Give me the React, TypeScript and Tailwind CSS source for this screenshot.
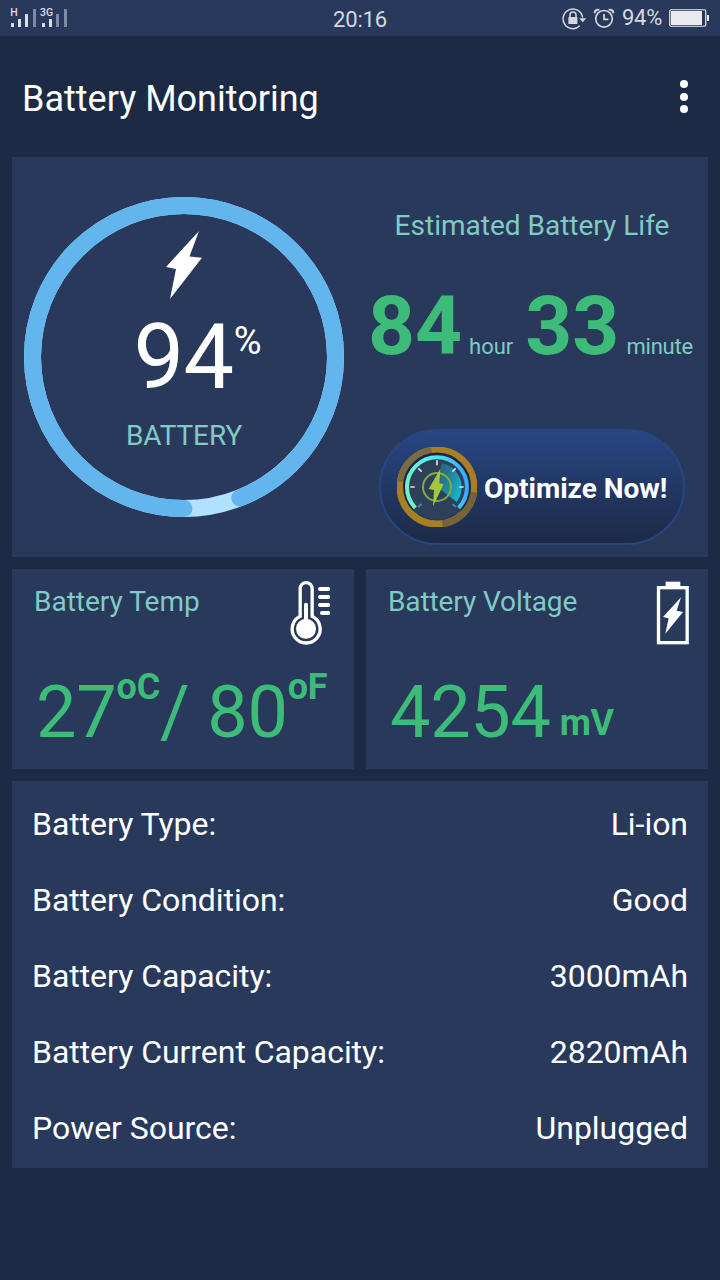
import React from "react";

const details = [
	{ label: "Battery Type:", value: "Li-ion" },
	{ label: "Battery Condition:", value: "Good" },
	{ label: "Battery Capacity:", value: "3000mAh" },
	{ label: "Battery Current Capacity:", value: "2820mAh" },
	{ label: "Power Source:", value: "Unplugged" },
];

const SignalIcons = () => (
	<svg width="70" height="36" viewBox="0 0 70 36" fill="#dcdfe6">
		<text x="10.3" y="15.8" fontSize="10.5" fontWeight="500">
			H
		</text>
		<text x="40" y="16.2" fontSize="10.5" fontWeight="500">
			3G
		</text>
		<rect x="11" y="23" width="3" height="4" rx="0.5" />
		<rect x="18" y="19" width="3" height="8" rx="0.5" />
		<rect x="25" y="14" width="3" height="13" rx="0.5" />
		<rect x="33" y="9" width="3" height="18" rx="0.5" fill="#7f8aa3" />
		<rect x="42" y="23" width="3" height="4" rx="0.5" />
		<rect x="49" y="19" width="3" height="8" rx="0.5" />
		<rect x="56" y="14" width="3" height="13" rx="0.5" fill="#7f8aa3" />
		<rect x="64" y="9" width="3" height="18" rx="0.5" fill="#7f8aa3" />
	</svg>
);

const RotationLockIcon = () => (
	<svg width="26" height="24" viewBox="0 0 26 24" fill="none" stroke="#d6d9e0">
		<path d="M17.8 19.8A9.8 9.8 0 1 1 20.6 11.5" strokeWidth="1.5" />
		<path d="M17.2 12.2h7l-3.5 4z" fill="#d6d9e0" stroke="none" />
		<rect x="6.4" y="11" width="9" height="7" rx="0.6" fill="#d6d9e0" stroke="none" />
		<path d="M8 11.5V9a3 3 0 0 1 6 0v2.5" strokeWidth="1.5" />
	</svg>
);

const AlarmIcon = () => (
	<svg width="22" height="22" viewBox="0 0 22 22" fill="none" stroke="#d6d9e0">
		<circle cx="11" cy="11.8" r="8.3" strokeWidth="1.7" />
		<path d="M11 7v5.4h4.5" strokeWidth="1.7" />
		<path d="M1.6 6.2C1.6 3.6 3.6 2.3 6.4 2.8M20.4 6.2c0-2.6-2-3.9-4.8-3.4" strokeWidth="2" />
	</svg>
);

const BatteryStatusIcon = () => (
	<svg width="41" height="20" viewBox="0 0 41 20">
		<rect x="0.75" y="1.75" width="36" height="16.5" rx="1.5" fill="none" stroke="#e9ebef" strokeWidth="1.2" />
		<rect x="2" y="3" width="31" height="14" fill="#e9ebef" />
		<rect x="38" y="7" width="2" height="6" fill="#e9ebef" />
	</svg>
);

const ChargeRing = () => (
	<svg width="320" height="320" viewBox="0 0 320 320" fill="none" className="[grid-area:1/1]">
		<circle cx="160" cy="160" r="151.5" stroke="#b0e2ff" strokeWidth="17" />
		<circle
			cx="160"
			cy="160"
			r="151.5"
			stroke="#63b5ee"
			strokeWidth="17"
			strokeLinecap="round"
			pathLength="100"
			strokeDasharray="94 100"
			transform="rotate(90 160 160)"
		/>
	</svg>
);

const BoltIcon = () => (
	<svg width="38" height="70" viewBox="0 0 38 70" fill="#fff">
		<path d="M34 1L24.5 26.5L37 27.7L5 69L11 39L1 37z" />
	</svg>
);

const GaugeIcon = () => (
	<svg width="80" height="80" viewBox="-120 -120 240 240" fill="none">
		<defs>
			<linearGradient id="arc" x1="0" x2="1" y1="0.4" y2="0.3">
				<stop offset="0" stopColor="#6ff2c6" />
				<stop offset="0.45" stopColor="#4feef0" />
				<stop offset="1" stopColor="#3aa8fb" />
			</linearGradient>
			<linearGradient id="sweep" x1="0" x2="1" y1="0.2" y2="0.8">
				<stop offset="0" stopColor="#2b8293" stopOpacity="0.5" />
				<stop offset="1" stopColor="#12bdd4" />
			</linearGradient>
		</defs>
		<circle r="111" stroke="#a87f22" strokeWidth="21" fill="#1d2a48" />
		<path d="M-110 -16A111 111 0 0 1 -16 -110" stroke="#7b6b45" strokeWidth="21" />
		<path d="M110 16A111 111 0 0 1 16 110" stroke="#75643a" strokeWidth="21" />
		<circle r="99" fill="#2c405a" />
		<path d="M-68 68A97 97 0 1 1 68 68" stroke="#1c2347" strokeWidth="10" />
		<path d="M0 0L14 -72A74 74 0 0 1 59 45z" fill="url(#sweep)" />
		<path d="M-65 63A90 90 0 1 1 65 63" stroke="url(#arc)" strokeWidth="12" />
		<path d="M0 -80V-65M-80 0H-67M80 0H67M-56 -56L-46 -46M56 -56L46 -46" stroke="#d8e4ea" strokeWidth="5" />
		<path d="M-57 60L-46 51M57 60L46 51" stroke="#3f86b5" strokeWidth="6" />
		<circle r="42" stroke="#84ac3b" strokeWidth="6" />
		<path d="M10 -55L-25 6L-9 9L-12 58L20 -8L7 -11z" fill="#a0c83a" />
	</svg>
);

const ThermometerIcon = () => (
	<svg width="42" height="66" viewBox="57 30 126 198" fill="none" stroke="#fff" strokeLinecap="round">
		<path d="M90.5 139V56a18 18 0 0 1 36 0v83a42 42 0 1 1 -36 0z" strokeWidth="10" />
		<circle cx="108" cy="176.5" r="30" fill="#fff" stroke="none" />
		<path d="M108 104V160" strokeWidth="12" />
		<path d="M150 57H175M150 81H175M150 105H175M156 129H175" strokeWidth="12" />
	</svg>
);

const VoltageIcon = () => (
	<svg width="34" height="66" viewBox="49 30 102 198">
		<rect x="56.5" y="53" width="86" height="165" fill="none" stroke="#fff" strokeWidth="10" />
		<rect x="78" y="35" width="44" height="16" fill="#fff" />
		<path d="M124 82L111 122L130 126L77 191L87 145L70 141z" fill="#fff" />
	</svg>
);

const StatusBar = () => (
	<div className="h-9 bg-[#28395c] grid grid-cols-[1fr_auto_1fr] items-center text-[#d6d9e0]">
		<SignalIcons />
		<p className="text-[22px] leading-8 pt-[3px] tracking-[-0.2px]">20:16</p>
		<div className="flex items-center justify-end pr-[10px]">
			<div className="pb-px">
				<RotationLockIcon />
			</div>
			<div className="ml-[5px] mr-[7px] pb-px">
				<AlarmIcon />
			</div>
			<p className="text-[22px] leading-8 mr-[7px] pb-px tracking-[-0.3px]">94%</p>
			<div className="pb-px">
				<BatteryStatusIcon />
			</div>
		</div>
	</div>
);

const App = () => {
	return (
		<main className="w-[720px] h-[1280px] bg-[#1c2a46] text-white font-[Roboto,sans-serif] overflow-hidden">
			<StatusBar />
			<header className="h-[121px] flex items-center justify-between pl-[22px] pr-8">
				<h1 className="text-[36px] leading-[44px] pt-1">Battery Monitoring</h1>
				<div className="flex flex-col gap-[4.5px]">
					<span className="size-2 rounded-full bg-white" />
					<span className="size-2 rounded-full bg-white" />
					<span className="size-2 rounded-full bg-white" />
				</div>
			</header>

			<div className="px-3 flex flex-col gap-3">
				<section className="h-[400px] bg-[#28395c] flex">
					<div className="w-[344px] pt-10 pl-3 grid content-start">
						<ChargeRing />
						<div className="[grid-area:1/1] w-[320px] pt-[33px] flex flex-col items-center">
							<BoltIcon />
							<div className="flex items-start pl-[27px] mt-2">
								<span className="text-[90px] leading-[100px] tracking-[-0.4px]">94</span>
								<span className="text-[38px] leading-[44px] pt-[11px]">%</span>
							</div>
							<p className="text-[28px] leading-8 mt-3 text-[#80cbc4] tracking-[-0.1px]">BATTERY</p>
						</div>
					</div>
					<div className="flex-1 flex flex-col items-center pt-[53px]">
						<h2 className="text-[28px] leading-8 text-[#80cbc4]">Estimated Battery Life</h2>
						<div className="flex items-baseline mt-[34px] pr-[3px] whitespace-nowrap text-[22px] text-[#80cbc4]">
							<b className="text-[82px] leading-[100px] text-[#3cbc78]">84</b>
							<span className="ml-[7px] mr-3">hour</span>
							<b className="text-[82px] leading-[100px] text-[#3cbc78]">33</b>
							<span className="ml-[7px] tracking-[-0.2px]">minute</span>
						</div>
						<button className="mt-[53px] w-[306px] h-[116px] rounded-full border-2 border-[#274583] bg-linear-to-b from-[#284684] to-[#1c2a46] flex items-center pl-4">
							<GaugeIcon />
							<span className="ml-[7px] text-[28px] leading-8 font-bold whitespace-nowrap pt-1">
								Optimize Now!
							</span>
						</button>
					</div>
				</section>

				<div className="grid grid-cols-2 gap-3">
					<section className="h-[200px] bg-[#28395c] pl-[22px] pr-[23px]">
						<div className="flex justify-between pt-[11px]">
							<h2 className="text-[28px] leading-8 pt-[6px] text-[#80cbc4]">Battery Temp</h2>
							<ThermometerIcon />
						</div>
						<div className="flex items-start mt-[23px] pl-[2px] text-[72px] leading-[88px] text-[#3cbc78] whitespace-nowrap tracking-[-0.2px]">
							<span>27</span>
							<b className="text-[36px] leading-9">oC</b>
							<span>/ 80</span>
							<b className="text-[36px] leading-9">oF</b>
						</div>
					</section>
					<section className="h-[200px] bg-[#28395c] pl-[22px] pr-[18px]">
						<div className="flex justify-between pt-[11px]">
							<h2 className="text-[28px] leading-8 pt-[6px] text-[#80cbc4] tracking-[-0.1px]">Battery Voltage</h2>
							<VoltageIcon />
						</div>
						<div className="flex items-start mt-[23px] pl-[2px] text-[72px] leading-[88px] text-[#3cbc78] tracking-[-0.3px]">
							<span>4254</span>
							<b className="text-[36px] leading-[108px] ml-[9px]">mV</b>
						</div>
					</section>
				</div>

				<section className="h-[387px] bg-[#28395c] px-5 pt-[5px]">
					{details.map((item) => (
						<div key={item.label} className="h-[76px] flex items-center justify-between text-[32px] tracking-[-0.04px]">
							<p>{item.label}</p>
							<p>{item.value}</p>
						</div>
					))}
				</section>
			</div>
		</main>
	);
};

export default App;
